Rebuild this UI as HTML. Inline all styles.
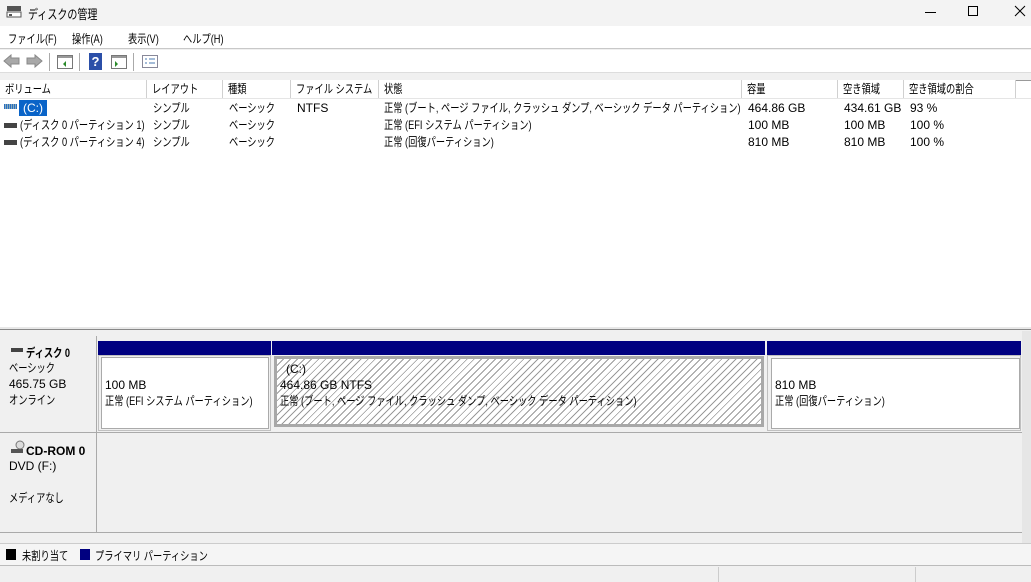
<!DOCTYPE html>
<html><head><meta charset="utf-8">
<style>
*{margin:0;padding:0;box-sizing:border-box}
body{width:1031px;height:582px;overflow:hidden;background:#f0f0f0;font-family:"Liberation Sans","Noto Sans CJK JP",sans-serif;font-size:12px;color:#000;position:relative}
.a{position:absolute;white-space:nowrap}
.s{transform:scaleX(.77);transform-origin:0 0}
.si{display:inline-block;transform:scaleX(.77);transform-origin:0 0}
.hd{position:absolute;top:80px;height:19px;border-right:1px solid #d0d0d0;padding-left:5px;line-height:19px;background:#fff;overflow:hidden;white-space:nowrap}
.c{position:absolute;line-height:17px;white-space:nowrap}
.hat{background:repeating-linear-gradient(135deg,#fff 0 4px,#9a9a9a 4px 5px)}
</style></head><body>
<!-- title -->
<div class="a" style="left:0;top:0;width:1031px;height:26px;background:#f3f3f3"></div>
<svg class="a" style="left:6px;top:5px" width="16" height="14"><rect x="1" y="1" width="14" height="5" fill="#555"/><rect x="1" y="7" width="14" height="5" fill="#fff" stroke="#555"/><rect x="3" y="9" width="3" height="2" fill="#555"/></svg>
<div class="a s" style="left:28px;top:4px;font-size:13px">ディスクの管理</div>
<div class="a" style="left:925px;top:12px;width:11px;height:1px;background:#000"></div>
<div class="a" style="left:968px;top:6px;width:10px;height:10px;border:1px solid #000"></div>
<svg class="a" style="left:1014px;top:5px" width="12" height="12"><path d="M1 1L11 11M11 1L1 11" stroke="#000" stroke-width="1"/></svg>
<!-- menu -->
<div class="a" style="left:0;top:26px;width:1031px;height:23px;background:#fff;border-bottom:1px solid #c8c8c8"></div>
<div class="a s" style="left:8px;top:30px">ファイル(F)</div>
<div class="a s" style="left:72px;top:30px">操作(A)</div>
<div class="a s" style="left:128px;top:30px">表示(V)</div>
<div class="a s" style="left:183px;top:30px">ヘルプ(H)</div>
<!-- toolbar -->
<div class="a" style="left:0;top:50px;width:1031px;height:23px;background:#fff;border-bottom:1px solid #ddd"></div>
<svg class="a" style="left:3px;top:54px" width="40" height="14"><path d="M1 7L8 1V4H16V10H8V13Z" fill="#a8a8a8" stroke="#888"/><path d="M39 7L32 1V4H24V10H32V13Z" fill="#a8a8a8" stroke="#888"/></svg>
<div class="a" style="left:49px;top:53px;width:1px;height:18px;background:#aaa"></div>
<svg class="a" style="left:57px;top:55px" width="16" height="14"><rect x="0.5" y="0.5" width="15" height="13" fill="#fff" stroke="#777"/><rect x="1" y="1" width="14" height="2" fill="#999"/><path d="M9 6v6l-3-3z" fill="#2a8a2a"/></svg>
<div class="a" style="left:79px;top:53px;width:1px;height:18px;background:#aaa"></div>
<div class="a" style="left:89px;top:53px;width:13px;height:17px;background:#2b4fa8;color:#fff;font-weight:bold;font-size:13px;text-align:center;line-height:17px">?</div>
<svg class="a" style="left:111px;top:55px" width="16" height="14"><rect x="0.5" y="0.5" width="15" height="13" fill="#fff" stroke="#777"/><rect x="1" y="1" width="14" height="2" fill="#999"/><path d="M4 6v6l3-3z" fill="#2a8a2a"/></svg>
<div class="a" style="left:133px;top:53px;width:1px;height:18px;background:#aaa"></div>
<svg class="a" style="left:142px;top:55px" width="16" height="13"><rect x="0.5" y="0.5" width="15" height="12" fill="#fff" stroke="#889"/><path d="M3 4h2M3 8h2M7 4h6M7 8h6" stroke="#4a7ab0"/></svg>
<!-- list -->
<div class="a" style="left:0;top:80px;width:1031px;height:247px;background:#fff;border-top:1px solid #999"></div>
<div class="hd" style="left:0;width:147px"><span class="si">ボリューム</span></div>
<div class="hd" style="left:147px;width:76px"><span class="si">レイアウト</span></div>
<div class="hd" style="left:223px;width:68px"><span class="si">種類</span></div>
<div class="hd" style="left:291px;width:88px"><span class="si">ファイル システム</span></div>
<div class="hd" style="left:379px;width:363px"><span class="si">状態</span></div>
<div class="hd" style="left:742px;width:96px"><span class="si">容量</span></div>
<div class="hd" style="left:838px;width:66px"><span class="si">空き領域</span></div>
<div class="hd" style="left:904px;width:112px"><span class="si">空き領域の割合</span></div>
<div class="a" style="left:0;top:98px;width:1031px;height:1px;background:#e5e5e5"></div>
<!-- rows -->
<div class="a" style="left:4px;top:104px;width:13px;height:5px;background:repeating-linear-gradient(90deg,#2a6fc0 0 1px,#8ab 1px 2px)"></div>
<div class="a" style="left:19px;top:100px;width:28px;height:16px;background:#0a64c8;color:#fff;line-height:16px;padding-left:4px">(C:)</div>
<div class="a" style="left:4px;top:123px;width:13px;height:5px;background:#444"></div>
<div class="c s" style="left:20px;top:117px">(ディスク 0 パーティション 1)</div>
<div class="a" style="left:4px;top:140px;width:13px;height:5px;background:#444"></div>
<div class="c s" style="left:20px;top:134px">(ディスク 0 パーティション 4)</div>
<div class="c s" style="left:153px;top:100px">シンプル</div><div class="c s" style="left:153px;top:117px">シンプル</div><div class="c s" style="left:153px;top:134px">シンプル</div>
<div class="c s" style="left:229px;top:100px">ベーシック</div><div class="c s" style="left:229px;top:117px">ベーシック</div><div class="c s" style="left:229px;top:134px">ベーシック</div>
<div class="c" style="left:297px;top:100px">NTFS</div>
<div class="c s" style="left:384px;top:100px">正常 (ブート, ページ ファイル, クラッシュ ダンプ, ベーシック データ パーティション)</div>
<div class="c s" style="left:384px;top:117px">正常 (EFI システム パーティション)</div>
<div class="c s" style="left:384px;top:134px">正常 (回復パーティション)</div>
<div class="c" style="left:748px;top:100px">464.86 GB</div><div class="c" style="left:748px;top:117px">100 MB</div><div class="c" style="left:748px;top:134px">810 MB</div>
<div class="c" style="left:844px;top:100px">434.61 GB</div><div class="c" style="left:844px;top:117px">100 MB</div><div class="c" style="left:844px;top:134px">810 MB</div>
<div class="c" style="left:910px;top:100px">93 %</div><div class="c" style="left:910px;top:117px">100 %</div><div class="c" style="left:910px;top:134px">100 %</div>
<!-- divider -->
<div class="a" style="left:0;top:327px;width:1031px;height:3px;background:#e8e8e8;border-bottom:1px solid #888"></div>
<!-- lower pane -->
<div class="a" style="left:0;top:331px;width:1022px;height:212px;background:#f0f0f0"></div>
<div class="a" style="left:96px;top:336px;width:1px;height:196px;background:#aaa"></div>
<div class="a" style="left:0;top:432px;width:1022px;height:1px;background:#aaa"></div>
<div class="a" style="left:0;top:532px;width:1022px;height:1px;background:#aaa"></div>
<div class="a" style="left:1022px;top:331px;width:9px;height:212px;background:#e6e6e6"></div>
<div class="a" style="left:11px;top:348px;width:12px;height:4px;background:#444"></div>
<div class="a s" style="left:26px;top:344px;font-weight:bold">ディスク 0</div>
<div class="a s" style="left:9px;top:360px;line-height:16px">ベーシック</div>
<div class="a" style="left:9px;top:376px;line-height:16px">465.75 GB</div>
<div class="a s" style="left:9px;top:392px;line-height:16px">オンライン</div>
<svg class="a" style="left:10px;top:440px" width="16" height="14"><circle cx="10" cy="5" r="4" fill="#ddd" stroke="#777"/><rect x="1" y="9" width="12" height="4" fill="#555"/></svg>
<div class="a" style="left:26px;top:444px;font-weight:bold">CD-ROM 0</div>
<div class="a" style="left:9px;top:459px">DVD (F:)</div>
<div class="a s" style="left:9px;top:489px">メディアなし</div>
<!-- partitions -->
<div class="a" style="left:98px;top:341px;width:173px;height:14px;background:#000080"></div>
<div class="a" style="left:98px;top:355px;width:173px;height:76px;background:#f0f0f0;border:1px solid #c0c0c0"></div>
<div class="a" style="left:101px;top:357px;width:168px;height:72px;background:#fff;border:1px solid #aaa"></div>
<div class="a" style="left:105px;top:377px;line-height:16px">100 MB</div>
<div class="a s" style="left:105px;top:393px;line-height:16px">正常 (EFI システム パーティション)</div>
<div class="a" style="left:272px;top:341px;width:493px;height:14px;background:#000080"></div>
<div class="a hat" style="left:274px;top:356px;width:490px;height:71px;border:3px solid #a8a8a8"></div>
<div class="a" style="left:286px;top:361px;line-height:16px">(C:)</div>
<div class="a" style="left:280px;top:377px;line-height:16px">464.86 GB NTFS</div>
<div class="a s" style="left:280px;top:393px;line-height:16px">正常 (ブート, ページ ファイル, クラッシュ ダンプ, ベーシック データ パーティション)</div>
<div class="a" style="left:767px;top:341px;width:254px;height:14px;background:#000080"></div>
<div class="a" style="left:767px;top:355px;width:254px;height:76px;border:1px solid #c0c0c0"></div>
<div class="a" style="left:771px;top:358px;width:249px;height:71px;background:#fff;border:1px solid #aaa"></div>
<div class="a" style="left:775px;top:377px;line-height:16px">810 MB</div>
<div class="a s" style="left:775px;top:393px;line-height:16px">正常 (回復パーティション)</div>
<!-- legend -->
<div class="a" style="left:0;top:543px;width:1031px;height:22px;background:#f5f5f5;border-top:1px solid #ccc"></div>
<div class="a" style="left:6px;top:549px;width:10px;height:11px;background:#000"></div>
<div class="a s" style="left:22px;top:547px">未割り当て</div>
<div class="a" style="left:80px;top:549px;width:10px;height:11px;background:#000080"></div>
<div class="a s" style="left:95px;top:547px">プライマリ パーティション</div>
<div class="a" style="left:0;top:565px;width:1031px;height:17px;border-top:1px solid #bbb;background:#f0f0f0"></div>
<div class="a" style="left:718px;top:567px;width:1px;height:15px;background:#ccc"></div>
<div class="a" style="left:915px;top:567px;width:1px;height:15px;background:#ccc"></div>
</body></html>
